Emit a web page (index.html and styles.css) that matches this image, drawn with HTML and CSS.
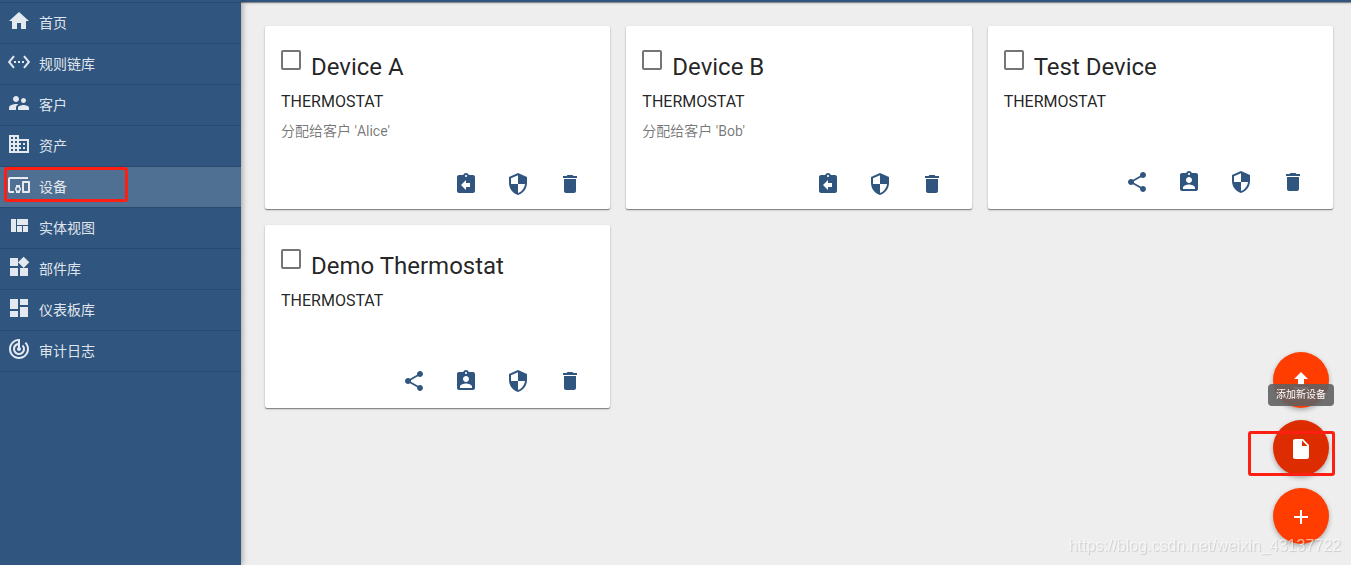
FILE: index.html
```html
<!DOCTYPE html>
<html lang="zh-CN">
<head>
    <meta charset="UTF-8">
    <meta name="viewport" content="width=device-width, initial-scale=1.0">
    <title>设备</title>
    <link rel="stylesheet" href="styles.css">
</head>
<body>
    <!-- Iconos -->
    <svg class="sprite" aria-hidden="true">
        <symbol id="home" viewBox="0 0 24 24"><path d="M10 20v-6h4v6h5v-8h3L12 3 2 12h3v8z"/></symbol>
        <symbol id="ethernet" viewBox="0 0 24 24"><path d="M7.77 6.76L6.23 5.48.82 12l5.41 6.52 1.54-1.28L3.42 12l4.35-5.24zM7 13h2v-2H7v2zm10-2h-2v2h2v-2zm-6 2h2v-2h-2v2zm6.77-7.52l-1.54 1.28L20.58 12l-4.35 5.24 1.54 1.28L23.18 12l-5.41-6.52z"/></symbol>
        <symbol id="people" viewBox="0 0 24 24"><path d="M16.5 12c1.38 0 2.49-1.12 2.49-2.5S17.88 7 16.5 7C15.12 7 14 8.12 14 9.5s1.12 2.5 2.5 2.5zM9 11c1.66 0 2.99-1.34 2.99-3S10.66 5 9 5C7.34 5 6 6.34 6 8s1.34 3 3 3zm7.5 3c-1.83 0-5.5.92-5.5 2.75V19h11v-2.25c0-1.83-3.67-2.75-5.5-2.75zM9 13c-2.33 0-7 1.17-7 3.5V19h7v-2.25c0-.85.33-2.34 2.37-3.47C10.5 13.1 9.66 13 9 13z"/></symbol>
        <symbol id="domain" viewBox="0 0 24 24"><path d="M12 7V3H2v18h20V7H12zM6 19H4v-2h2v2zm0-4H4v-2h2v2zm0-4H4V9h2v2zm0-4H4V5h2v2zm4 12H8v-2h2v2zm0-4H8v-2h2v2zm0-4H8V9h2v2zm0-4H8V5h2v2zm10 12h-8v-2h2v-2h-2v-2h2v-2h-2V9h8v10zm-2-8h-2v2h2v-2zm0 4h-2v2h2v-2z"/></symbol>
        <symbol id="devices" viewBox="0 0 24 24"><path d="M3 6h18V4H3c-1.1 0-2 .9-2 2v12c0 1.1.9 2 2 2h4v-2H3V6zm10 6H9v1.78c-.61.55-1 1.33-1 2.22s.39 1.67 1 2.22V20h4v-1.78c.61-.55 1-1.34 1-2.22s-.39-1.67-1-2.22V12zm-2 5.5c-.83 0-1.5-.67-1.5-1.5s.67-1.5 1.5-1.5 1.5.67 1.5 1.5-.67 1.5-1.5 1.5zM22 8h-6c-.5 0-1 .5-1 1v10c0 .5.5 1 1 1h6c.5 0 1-.5 1-1V9c0-.5-.5-1-1-1zm-1 10h-4v-8h4v8z"/></symbol>
        <symbol id="quilt" viewBox="0 0 24 24"><path d="M10 18h5v-6h-5v6zm-6 0h5V5H4v13zm12 0h5v-6h-5v6zM10 5v6h11V5H10z"/></symbol>
        <symbol id="widgets" viewBox="0 0 24 24"><path d="M13 13v8h8v-8h-8zM3 21h8v-8H3v8zM3 3v8h8V3H3zm13.66-1.31L11 7.34 16.66 13l5.66-5.66-5.66-5.65z"/></symbol>
        <symbol id="dashboard" viewBox="0 0 24 24"><path d="M3 13h8V3H3v10zm0 8h8v-6H3v6zm10 0h8V11h-8v10zm0-18v6h8V3h-8z"/></symbol>
        <symbol id="track" viewBox="0 0 24 24"><path d="M19.07 4.93l-1.41 1.41C19.1 7.79 20 9.79 20 12c0 4.42-3.58 8-8 8s-8-3.58-8-8c0-4.08 3.05-7.44 7-7.93v2.02C8.16 6.57 6 9.03 6 12c0 3.31 2.69 6 6 6s6-2.69 6-6c0-1.66-.67-3.16-1.76-4.24l-1.41 1.41C15.55 9.9 16 10.9 16 12c0 2.21-1.79 4-4 4s-4-1.79-4-4c0-1.86 1.28-3.41 3-3.86v2.14c-.6.35-1 .98-1 1.72 0 1.1.9 2 2 2s2-.9 2-2c0-.74-.4-1.38-1-1.72V2h-1C6.48 2 2 6.48 2 12s4.48 10 10 10 10-4.48 10-10c0-2.76-1.12-5.26-2.93-7.07z"/></symbol>
        <symbol id="return" viewBox="0 0 24 24"><path d="M19 3h-4.18C14.4 1.84 13.3 1 12 1c-1.3 0-2.4.84-2.82 2H5c-1.1 0-2 .9-2 2v14c0 1.1.9 2 2 2h14c1.1 0 2-.9 2-2V5c0-1.1-.9-2-2-2zm-7 0c.55 0 1 .45 1 1s-.45 1-1 1-1-.45-1-1 .45-1 1-1zm4 12h-4v3l-5-5 5-5v3h4v4z"/></symbol>
        <symbol id="assign" viewBox="0 0 24 24"><path d="M19 3h-4.18C14.4 1.84 13.3 1 12 1c-1.3 0-2.4.84-2.82 2H5c-1.1 0-2 .9-2 2v14c0 1.1.9 2 2 2h14c1.1 0 2-.9 2-2V5c0-1.1-.9-2-2-2zm-7 0c.55 0 1 .45 1 1s-.45 1-1 1-1-.45-1-1 .45-1 1-1zm0 4c1.66 0 3 1.34 3 3s-1.34 3-3 3-3-1.34-3-3 1.34-3 3-3zm6 12H6v-1.4c0-2 4-3.1 6-3.1s6 1.1 6 3.1V19z"/></symbol>
        <symbol id="security" viewBox="0 0 24 24"><path d="M12 1L3 5v6c0 5.55 3.84 10.74 9 12 5.16-1.26 9-6.45 9-12V5l-9-4zm0 10.99h7c-.53 4.12-3.28 7.79-7 8.94V12H5V6.3l7-3.11v8.8z"/></symbol>
        <symbol id="delete" viewBox="0 0 24 24"><path d="M6 19c0 1.1.9 2 2 2h8c1.1 0 2-.9 2-2V7H6v12zM19 4h-3.5l-1-1h-5l-1 1H5v2h14V4z"/></symbol>
        <symbol id="share" viewBox="0 0 24 24"><path d="M18 16.08c-.76 0-1.44.3-1.96.77L8.91 12.7c.05-.23.09-.46.09-.7s-.04-.47-.09-.7l7.05-4.11c.54.5 1.25.81 2.04.81 1.66 0 3-1.34 3-3s-1.34-3-3-3-3 1.34-3 3c0 .24.04.47.09.7L8.04 9.81C7.5 9.31 6.79 9 6 9c-1.66 0-3 1.34-3 3s1.34 3 3 3c.79 0 1.5-.31 2.04-.81l7.12 4.16c-.05.21-.08.43-.08.65 0 1.61 1.31 2.92 2.92 2.92s2.92-1.31 2.92-2.92-1.31-2.92-2.92-2.92z"/></symbol>
        <symbol id="upload" viewBox="0 0 24 24"><path d="M9 16h6v-6h4l-7-7-7 7h4zm-4 2h14v2H5z"/></symbol>
        <symbol id="file" viewBox="0 0 24 24"><path d="M6 2c-1.1 0-1.99.9-1.99 2L4 20c0 1.1.89 2 1.99 2H18c1.1 0 2-.9 2-2V8l-6-6H6zm7 7V3.5L18.5 9H13z"/></symbol>
        <symbol id="add" viewBox="0 0 24 24"><path d="M19 13h-6v6h-2v-6H5v-2h6V5h2v6h6v2z"/></symbol>
    </svg>

    <div class="app">
        <!-- Menu lateral -->
        <nav class="sidebar">
            <ul class="menu">
                <li><a class="menu-item" href="#"><svg class="icon"><use href="#home"/></svg><span>首页</span></a></li>
                <li><a class="menu-item" href="#"><svg class="icon"><use href="#ethernet"/></svg><span>规则链库</span></a></li>
                <li><a class="menu-item" href="#"><svg class="icon"><use href="#people"/></svg><span>客户</span></a></li>
                <li><a class="menu-item" href="#"><svg class="icon"><use href="#domain"/></svg><span>资产</span></a></li>
                <li class="marked"><a class="menu-item active" href="#"><svg class="icon"><use href="#devices"/></svg><span>设备</span></a></li>
                <li><a class="menu-item" href="#"><svg class="icon"><use href="#quilt"/></svg><span>实体视图</span></a></li>
                <li><a class="menu-item" href="#"><svg class="icon"><use href="#widgets"/></svg><span>部件库</span></a></li>
                <li><a class="menu-item" href="#"><svg class="icon"><use href="#dashboard"/></svg><span>仪表板库</span></a></li>
                <li><a class="menu-item" href="#"><svg class="icon"><use href="#track"/></svg><span>审计日志</span></a></li>
            </ul>
        </nav>

        <!-- Contenido -->
        <div class="content">
            <header class="toolbar"></header>
            <main class="cards">
                <article class="card">
                    <div class="card-head">
                        <input type="checkbox" id="device-a">
                        <label class="card-title" for="device-a">Device A</label>
                    </div>
                    <div class="card-type">THERMOSTAT</div>
                    <div class="card-desc">分配给客户 'Alice'</div>
                    <div class="actions">
                        <button aria-label="取消分配客户"><svg class="icon"><use href="#return"/></svg></button>
                        <button aria-label="管理凭据"><svg class="icon"><use href="#security"/></svg></button>
                        <button aria-label="删除设备"><svg class="icon"><use href="#delete"/></svg></button>
                    </div>
                </article>
                <article class="card">
                    <div class="card-head">
                        <input type="checkbox" id="device-b">
                        <label class="card-title" for="device-b">Device B</label>
                    </div>
                    <div class="card-type">THERMOSTAT</div>
                    <div class="card-desc">分配给客户 'Bob'</div>
                    <div class="actions">
                        <button aria-label="取消分配客户"><svg class="icon"><use href="#return"/></svg></button>
                        <button aria-label="管理凭据"><svg class="icon"><use href="#security"/></svg></button>
                        <button aria-label="删除设备"><svg class="icon"><use href="#delete"/></svg></button>
                    </div>
                </article>
                <article class="card">
                    <div class="card-head">
                        <input type="checkbox" id="test-device">
                        <label class="card-title" for="test-device">Test Device</label>
                    </div>
                    <div class="card-type">THERMOSTAT</div>
                    <div class="card-desc"></div>
                    <div class="actions">
                        <button aria-label="公开设备"><svg class="icon"><use href="#share"/></svg></button>
                        <button aria-label="分配给客户"><svg class="icon"><use href="#assign"/></svg></button>
                        <button aria-label="管理凭据"><svg class="icon"><use href="#security"/></svg></button>
                        <button aria-label="删除设备"><svg class="icon"><use href="#delete"/></svg></button>
                    </div>
                </article>
                <article class="card">
                    <div class="card-head">
                        <input type="checkbox" id="demo-thermostat">
                        <label class="card-title" for="demo-thermostat">Demo Thermostat</label>
                    </div>
                    <div class="card-type">THERMOSTAT</div>
                    <div class="card-desc"></div>
                    <div class="actions">
                        <button aria-label="公开设备"><svg class="icon"><use href="#share"/></svg></button>
                        <button aria-label="分配给客户"><svg class="icon"><use href="#assign"/></svg></button>
                        <button aria-label="管理凭据"><svg class="icon"><use href="#security"/></svg></button>
                        <button aria-label="删除设备"><svg class="icon"><use href="#delete"/></svg></button>
                    </div>
                </article>
            </main>
        </div>
    </div>

    <!-- Botones flotantes -->
    <div class="fabs">
        <button class="fab" aria-label="导入设备"><svg class="icon"><use href="#upload"/></svg></button>
        <div class="fab-marked">
            <button class="fab fab-hover" aria-label="添加新设备"><svg class="icon"><use href="#file"/></svg></button>
            <div class="tooltip" role="tooltip">添加新设备</div>
        </div>
        <button class="fab" aria-label="添加"><svg class="icon"><use href="#add"/></svg></button>
    </div>
    <div class="watermark">https://blog.csdn.net/weixin_43137722</div>
</body>
</html>
```
FILE: styles.css
```css
*, *::after {
    box-sizing: border-box;
}
body {
    margin: 0;
    font-family: Roboto, "Noto Sans CJK SC", sans-serif;
    font-size: 14px;
    color: rgba(0, 0, 0, 0.87);
    background-color: #eee;
}
button {
    border: none;
    padding: 0;
    cursor: pointer;
}
.sprite {
    display: none;
}
.icon {
    width: 24px;
    height: 24px;
    fill: currentColor;
    flex: none;
}
.app {
    display: flex;
    min-height: 100vh;
}

/* Menu lateral */
.sidebar {
    position: relative;
    z-index: 2;
    width: 241px;
    flex: none;
    padding-top: 2px;
    background-color: #305680;
    box-shadow: 1px 0 6px rgba(0, 0, 0, 0.35);
}
.menu {
    list-style: none;
    margin: 0;
    padding: 0;
    border-top: 1px solid #294a70;
}
.menu li {
    border-bottom: 1px solid #294a70;
}
.menu-item {
    display: flex;
    align-items: center;
    gap: 8px;
    height: 40px;
    padding: 0 0 2px 7px;
    color: rgba(255, 255, 255, 0.87);
    text-decoration: none;
}
.menu-item .icon {
    margin-bottom: 2px;
}
.menu-item.active {
    background-color: #4f7092;
}
.marked {
    position: relative;
}
.marked::after {
    content: "";
    position: absolute;
    top: 0;
    left: 4px;
    width: 124px;
    height: 35px;
    border: 3px solid #ff1f12;
    border-radius: 3px;
}

/* Contenido */
.content {
    flex: 1;
    min-width: 0;
}
.toolbar {
    height: 2px;
    background-color: #305680;
    box-shadow: 0 1px 1px rgba(0, 0, 0, 0.4), 0 1px 3px rgba(0, 0, 0, 0.2);
}
.cards {
    display: grid;
    grid-template-columns: repeat(3, 1fr);
    gap: 16px;
    padding: 24px 18px 24px 24px;
}
.card {
    min-height: 183px;
    padding: 24px 20px 5px 16px;
    background-color: #fff;
    border-radius: 2px;
    box-shadow: 0 1px 1px rgba(0, 0, 0, 0.4), 0 1px 3px rgba(0, 0, 0, 0.16);
}
.card-head {
    display: flex;
    align-items: flex-start;
    gap: 10px;
}
.card-head input {
    appearance: none;
    width: 20px;
    height: 20px;
    margin: 0;
    border: 2px solid #757575;
    border-radius: 2px;
}
.card-title {
    font-size: 24px;
    line-height: 34px;
}
.card-type {
    font-size: 16px;
    line-height: 20px;
    margin-top: 8px;
}
.card-desc {
    min-height: 18px;
    line-height: 20px;
    margin-top: 9px;
    color: rgba(0, 0, 0, 0.54);
}
.actions {
    display: flex;
    justify-content: flex-end;
    gap: 12px;
    margin-top: 23px;
}
.actions button {
    display: flex;
    align-items: center;
    justify-content: center;
    width: 40px;
    height: 40px;
    background: none;
    color: #305680;
}

/* Botones flotantes */
.fabs {
    position: fixed;
    right: 22px;
    bottom: 21px;
    z-index: 3;
    display: flex;
    flex-direction: column;
    gap: 12px;
}
.fab {
    display: flex;
    align-items: center;
    justify-content: center;
    width: 56px;
    height: 56px;
    padding-top: 2px;
    border-radius: 50%;
    color: #fff;
    background-color: #ff3d00;
    box-shadow: 0 2px 5px rgba(0, 0, 0, 0.3);
}
.fab-hover {
    background-color: #dd2c00;
}
.fab-marked {
    position: relative;
}
.fab-marked::after {
    content: "";
    position: absolute;
    top: 11px;
    right: -6px;
    width: 87px;
    height: 45px;
    border: 3px solid #ff1f12;
    border-radius: 3px;
}
.tooltip {
    position: absolute;
    top: -36px;
    right: -5px;
    height: 22px;
    padding: 0 8px;
    border-radius: 4px;
    font-size: 10px;
    line-height: 22px;
    white-space: nowrap;
    color: #fff;
    background-color: rgba(97, 97, 97, 0.9);
}
.watermark {
    position: fixed;
    right: 10px;
    bottom: 9px;
    z-index: 4;
    font-family: "Liberation Sans", Arial, sans-serif;
    font-size: 16px;
    line-height: 20px;
    color: rgba(255, 255, 255, 0.6);
    text-shadow: 1px 1px 1px rgba(0, 0, 0, 0.14);
    pointer-events: none;
}
```
